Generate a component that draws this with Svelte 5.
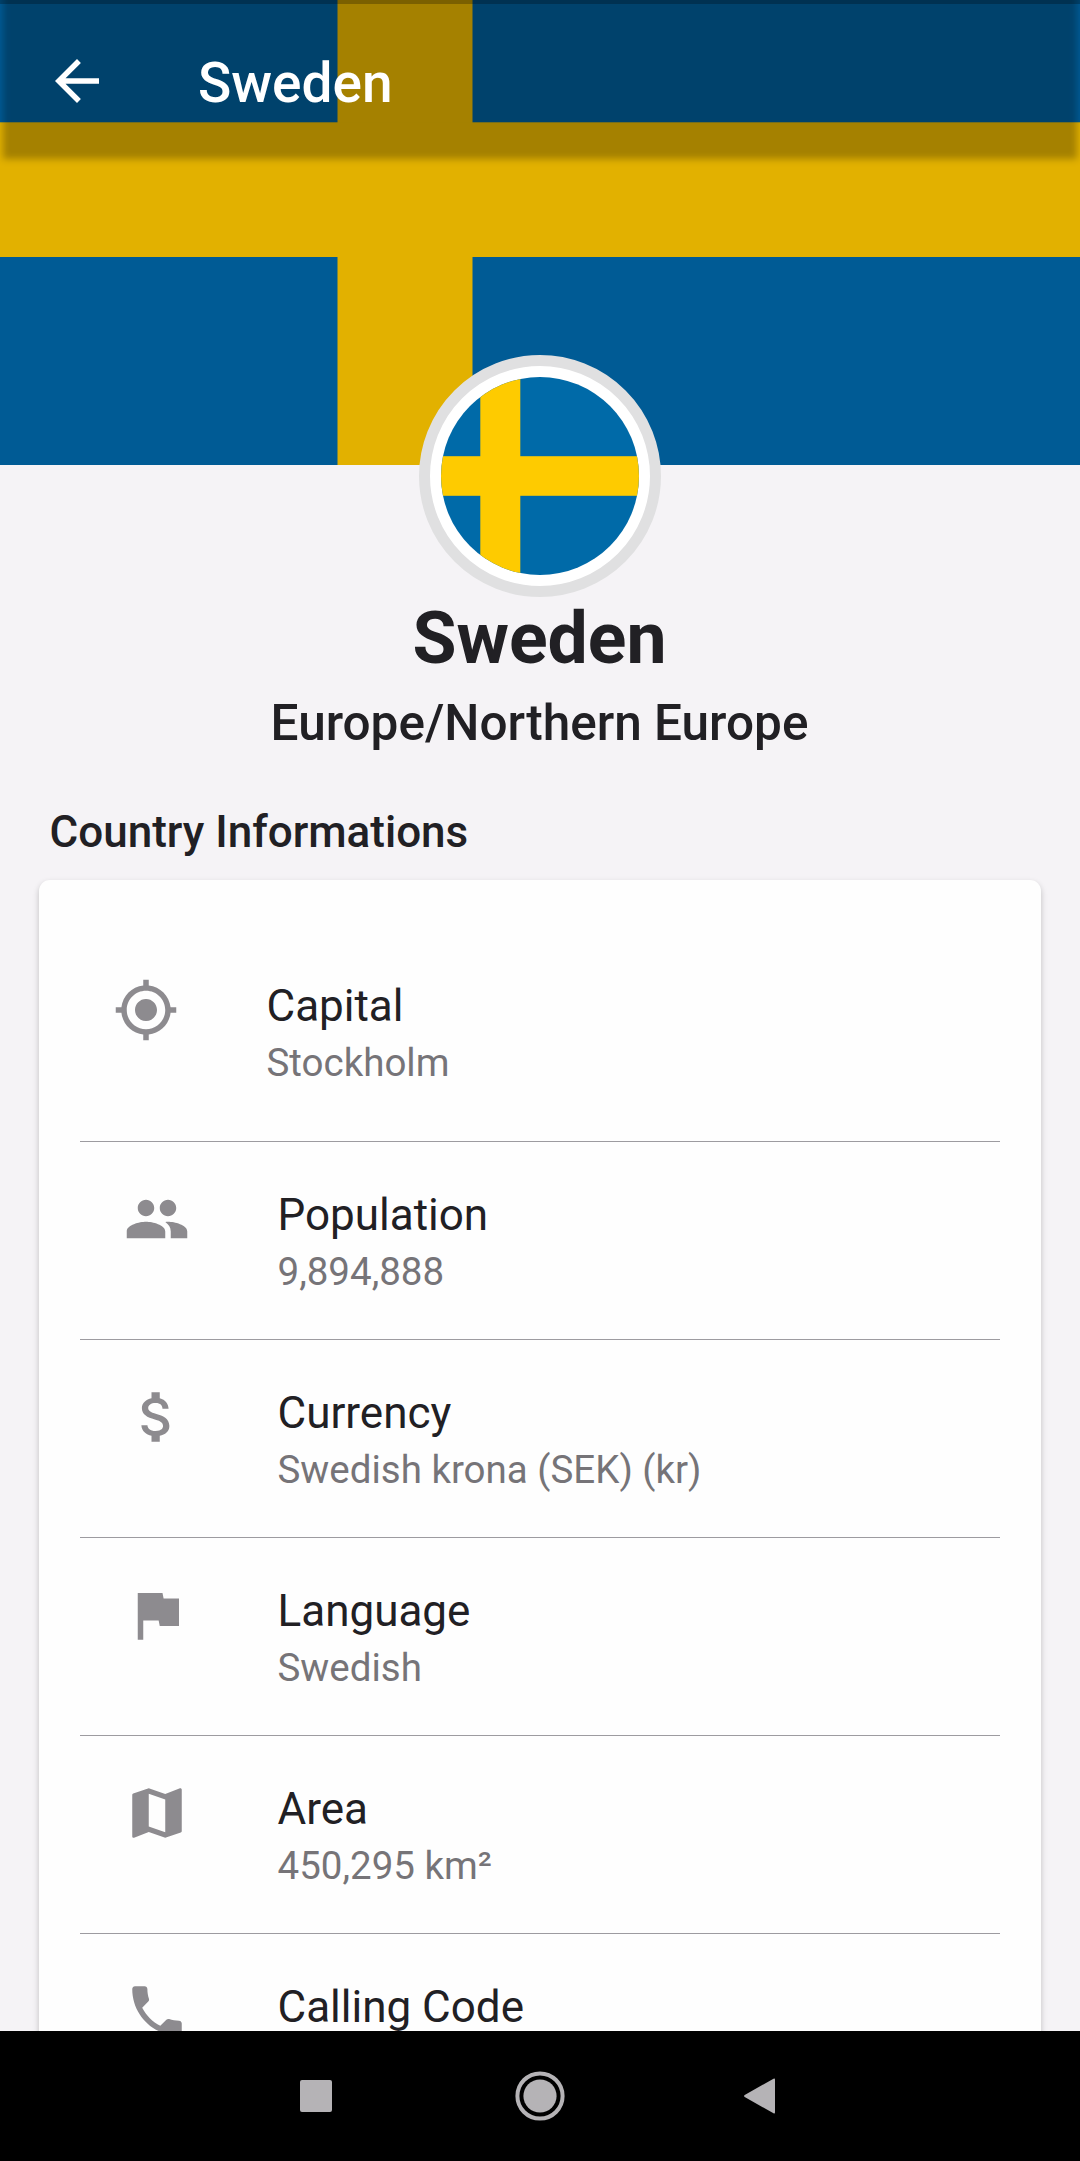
<script lang="ts">
  interface InfoRow {
    label: string;
    value?: string;
    icon: string;
  }

  const country = {
    name: "Sweden",
    region: "Europe/Northern Europe",
  };

  const rows: InfoRow[] = [
    {
      label: "Capital",
      value: "Stockholm",
      icon: "M12 8c-2.21 0-4 1.79-4 4s1.79 4 4 4 4-1.79 4-4-1.79-4-4-4zm8.94 3c-.46-4.17-3.77-7.48-7.94-7.94V1h-2v2.06C6.83 3.52 3.52 6.83 3.06 11H1v2h2.06c.46 4.17 3.77 7.48 7.94 7.94V23h2v-2.06c4.17-.46 7.48-3.77 7.94-7.94H23v-2h-2.06zM12 19c-3.87 0-7-3.13-7-7s3.13-7 7-7 7 3.13 7 7-3.13 7-7 7z",
    },
    {
      label: "Population",
      value: "9,894,888",
      icon: "M16 11c1.66 0 2.99-1.34 2.99-3S17.66 5 16 5c-1.66 0-3 1.34-3 3s1.34 3 3 3zm-8 0c1.66 0 2.99-1.34 2.99-3S9.66 5 8 5C6.34 5 5 6.34 5 8s1.34 3 3 3zm0 2c-2.33 0-7 1.17-7 3.5V19h14v-2.5c0-2.33-4.67-3.5-7-3.5zm8 0c-.29 0-.62.02-.97.05 1.16.84 1.97 1.97 1.97 3.45V19h6v-2.5c0-2.33-4.67-3.5-7-3.5z",
    },
    {
      label: "Currency",
      value: "Swedish krona (SEK) (kr)",
      icon: "M11.8 10.9c-2.27-.59-3-1.2-3-2.15 0-1.09 1.01-1.85 2.7-1.85 1.78 0 2.44.85 2.5 2.1h2.21c-.07-1.72-1.12-3.3-3.21-3.81V3h-3v2.16c-1.94.42-3.5 1.68-3.5 3.61 0 2.31 1.91 3.46 4.7 4.13 2.5.6 3 1.48 3 2.41 0 .69-.49 1.79-2.7 1.79-2.06 0-2.87-.92-2.98-2.1h-2.2c.12 2.19 1.76 3.42 3.68 3.83V21h3v-2.15c1.95-.37 3.5-1.5 3.5-3.55 0-2.84-2.43-3.81-4.7-4.4z",
    },
    {
      label: "Language",
      value: "Swedish",
      icon: "M14.4 6L14 4H5v17h2v-7h5.6l.4 2h7V6z",
    },
    {
      label: "Area",
      value: "450,295 km²",
      icon: "M20.5 3l-.16.03L15 5.1 9 3 3.36 4.9c-.21.07-.36.25-.36.48V20.5c0 .28.22.5.5.5l.16-.03L9 18.9l6 2.1 5.64-1.9c.21-.07.36-.25.36-.48V3.5c0-.28-.22-.5-.5-.5zM15 19l-6-2.11V5l6 2.11V19z",
    },
    {
      label: "Calling Code",
      icon: "M6.62 10.79c1.44 2.83 3.76 5.14 6.59 6.59l2.2-2.2c.27-.27.67-.36 1.02-.24 1.12.37 2.33.57 3.57.57.55 0 1 .45 1 1V20c0 .55-.45 1-1 1-9.39 0-17-7.61-17-17 0-.55.45-1 1-1h3.5c.55 0 1 .45 1 1 0 1.25.2 2.45.57 3.57.11.35.03.74-.25 1.02l-2.2 2.2z",
    },
  ];
</script>

<div class="screen">
  <main class="content">
    <header class="cover">
      <svg class="cover-flag" viewBox="0 0 1080 465" preserveAspectRatio="none">
        <rect class="blue" width="1080" height="465" />
        <rect class="yellow" x="337.5" width="135" height="465" />
        <rect class="yellow" y="122.3" width="1080" height="134.7" />
      </svg>
      <div class="app-bar">
        <svg class="back" viewBox="0 0 24 24">
          <path d="M20 11H7.83l5.59-5.59L12 4l-8 8 8 8 1.41-1.41L7.83 13H20v-2z" />
        </svg>
        <span class="app-title">{country.name}</span>
      </div>
    </header>

    <section class="profile">
      <div class="avatar">
        <svg viewBox="0 0 198 198">
          <rect class="blue" width="198" height="198" />
          <rect class="yellow" x="39.3" width="40" height="198" />
          <rect class="yellow" y="79.2" width="198" height="39.6" />
        </svg>
      </div>
      <h1>{country.name}</h1>
      <h2>{country.region}</h2>
    </section>

    <h3>Country Informations</h3>

    <div class="card">
      {#each rows as row}
        <div class="row">
          <svg class="icon" viewBox="0 0 24 24"><path d={row.icon} /></svg>
          <div class="text">
            <div class="label">{row.label}</div>
            {#if row.value}
              <div class="value">{row.value}</div>
            {/if}
          </div>
        </div>
      {/each}
    </div>
  </main>

  <!-- System navigation -->
  <nav class="nav-bar">
    <svg viewBox="0 0 50 50"><rect x="9" y="9" width="32" height="32" rx="2" /></svg>
    <svg viewBox="0 0 50 50">
      <circle class="ring" cx="25" cy="25" r="22.6" />
      <circle cx="25" cy="25" r="16.6" />
    </svg>
    <svg viewBox="0 0 50 50">
      <path d="M34.500 7.700q1.500-.9 1.500 1v32.600q0 1.900-1.500 1L5.700 26q-1.300-1 0-2z" />
    </svg>
  </nav>
</div>

<style>
  :global(body) {
    margin: 0;
  }

  .screen {
    display: flex;
    flex-direction: column;
    width: 1080px;
    height: 2161px;
    overflow: hidden;
    background: #f5f3f6;
    color: #212024;
    font-family: Roboto, "Liberation Sans", sans-serif;
  }

  .content {
    flex: 1;
    min-height: 0;
    overflow: hidden;
  }

  svg {
    display: block;
  }

  /* Cover */
  .cover {
    position: relative;
    height: 465px;
    overflow: hidden;
  }

  .cover-flag {
    width: 100%;
    height: 100%;
  }

  .cover .blue {
    fill: #005b95;
  }

  .cover .yellow {
    fill: #e2b100;
  }

  .app-bar {
    position: absolute;
    inset: 0 0 auto;
    display: flex;
    align-items: center;
    box-sizing: border-box;
    height: 158px;
    padding: 4px 44px 0;
    border-top: 4px solid rgba(0, 0, 0, 0.25);
  }

  /* Elevation shadow seen through the transparent bar */
  .app-bar::before {
    content: "";
    position: absolute;
    inset: -20px 3px -1px;
    background: rgba(0, 0, 0, 0.27);
    filter: blur(3.5px);
  }

  .back {
    position: relative;
    width: 66px;
    height: 66px;
    margin-top: -4px;
    fill: #fff;
  }

  .app-title {
    position: relative;
    margin: 0 0 0 88px;
    color: #fff;
    font-size: 55px;
    font-weight: 500;
    line-height: 64px;
  }

  /* Profile */
  .profile {
    position: relative;
    display: flex;
    flex-direction: column;
    align-items: center;
    margin-top: -110px;
  }

  .avatar {
    box-sizing: border-box;
    width: 242px;
    height: 242px;
    padding: 11px;
    border: 11px solid #e0e0e1;
    border-radius: 50%;
    background: #fff;
  }

  .avatar svg {
    width: 198px;
    height: 198px;
    border-radius: 50%;
  }

  .avatar .blue {
    fill: #006aa8;
  }

  .avatar .yellow {
    fill: #fecb00;
  }

  h1 {
    margin: 0;
    padding-right: 1px;
    font-size: 71.5px;
    font-weight: 700;
    line-height: 84px;
  }

  h2 {
    margin: 13px 0 0;
    padding-right: 1px;
    font-size: 49.5px;
    font-weight: 500;
    line-height: 58px;
  }

  h3 {
    margin: 54px 0 22px 49.5px;
    font-size: 44px;
    font-weight: 500;
    line-height: 52px;
  }

  /* Info card */
  .card {
    margin: 0 39px;
    padding: 0 41px;
    border-radius: 11px;
    background: #fefefe;
    box-shadow: 0 3px 6px rgba(0, 0, 0, 0.22);
  }

  .row {
    display: flex;
    box-sizing: border-box;
    height: 198px;
    padding: 44px 43.5px 0;
    border-bottom: 1px solid #9d9ba0;
  }

  .row:first-child {
    height: 262px;
    padding: 97px 32.5px 0;
  }

  .icon {
    flex: none;
    width: 66px;
    height: 66px;
    fill: #8d8b8f;
  }

  .text {
    margin: 3px 0 0 88px;
  }

  .label {
    font-size: 44px;
    line-height: 52px;
  }

  .value {
    margin-top: 8px;
    color: #767478;
    font-size: 38.5px;
    line-height: 46px;
  }

  /* System navigation */
  .nav-bar {
    position: relative;
    display: flex;
    align-items: center;
    justify-content: center;
    gap: 174px;
    height: 130px;
    background: #000;
  }

  .nav-bar svg {
    width: 50px;
    height: 50px;
    fill: #b5b3b6;
  }

  .nav-bar .ring {
    fill: none;
    stroke: #b5b3b6;
    stroke-width: 4;
  }
</style>
